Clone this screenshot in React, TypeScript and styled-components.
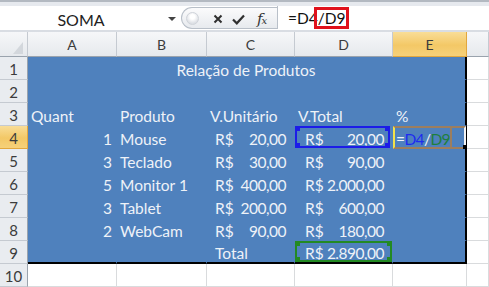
import React from "react";
import styled, { createGlobalStyle, css } from "styled-components";

const Global = createGlobalStyle`
  html, body { margin: 0; padding: 0; background: #fff; overflow: hidden; }
  body { font-family: Lato, "Open Sans", sans-serif; }
`;

const Window = styled.div`
  width: 489px;
  height: 287px;
  overflow: hidden;
  display: flex;
  flex-direction: column;
`;

/* ---------- formula bar ---------- */
const FormulaBar = styled.div`
  height: 33px;
  box-sizing: border-box;
  display: flex;
  padding: 6px 0 3px 0;
  background: linear-gradient(#b3b9c1 0 2px, #e6e9ee 2px 6px, #fff 6px 30px, #d9dde3 30px);
`;

const NameBox = styled.div`
  width: 181px;
  display: flex;
  align-items: center;
  background: #fff;
`;

const NameText = styled.div`
  flex: 1;
  text-align: center;
  font-size: 16px;
  color: #222;
  padding: 3px 0 0 0;
`;

const DropArrow = styled.div`
  width: 19px;
  display: flex;
  justify-content: center;
  &::after {
    content: "";
    border-left: 4px solid transparent;
    border-right: 4px solid transparent;
    border-top: 4px solid #444;
    margin-top: 3px;
  }
`;

const Pill = styled.div`
  width: 96px;
  margin-top: 1px;
  box-sizing: border-box;
  display: flex;
  align-items: center;
  border: 1px solid #b8bfc8;
  border-right: none;
  border-radius: 12px 0 0 12px;
  background: linear-gradient(#fbfbfc, #e7eaee);
`;

const Grip = styled.div`
  width: 11px;
  height: 11px;
  margin-left: 4px;
  border-radius: 50%;
  border: 1px solid #cfd3d9;
  background: radial-gradient(circle at 50% 35%, #ffffff 0 25%, #dde0e5 70%);
`;

const IconSlot = styled.div<{ $ml: number }>`
  margin-left: ${(p) => p.$ml}px;
  margin-top: 2px;
  display: flex;
  align-items: center;
`;

const Fx = styled.span`
  font-family: "DejaVu Serif", "Liberation Serif", serif;
  font-style: italic;
  font-size: 15px;
  color: #333;
  letter-spacing: -1px;
  & small {
    font-size: 10px;
    font-style: italic;
  }
`;

const FormulaInput = styled.div`
  flex: 1;
  background: #fff;
  border-left: 1px solid #b9c0c9;
  display: flex;
  align-items: center;
  padding: 1px 0 0 10px;
  font-size: 15.5px;
  color: #111;
`;

const Marked = styled.span`
  display: inline-block;
  border: 3px solid #e0121c;
  margin-left: -4px;
  padding: 0 0 0 1px;
  line-height: 16px;
`;

/* ---------- sheet ---------- */
const Grid = styled.div`
  display: grid;
  grid-template-columns: 28px 89px 90px 88px 98px 74px 1fr;
  grid-template-rows: 25px repeat(10, 23px);
`;

const headerBase = css`
  box-sizing: border-box;
  display: flex;
  align-items: center;
  justify-content: center;
  font-size: 14px;
  color: #3c3c3c;
`;

const ColHead = styled.div<{ $active?: boolean }>`
  ${headerBase}
  padding-top: 1px;
  border-right: 1px solid ${(p) => (p.$active ? "#e2a73d" : "#c5cad1")};
  border-bottom: 1px solid ${(p) => (p.$active ? "#e2a73d" : "#9aa3ad")};
  background: ${(p) =>
    p.$active
      ? "linear-gradient(#f9dd97, #f3c866 55%, #f6d17a)"
      : "linear-gradient(#f6f7f9, #e6e9ed)"};
`;

const Corner = styled.div`
  box-sizing: border-box;
  border-right: 1px solid #c5cad1;
  border-bottom: 1px solid #9aa3ad;
  background: linear-gradient(#f6f7f9, #e6e9ed);
  display: flex;
  align-items: flex-end;
  justify-content: flex-end;
  padding: 0 4px 2px 0;
  &::after {
    content: "";
    border-left: 10px solid transparent;
    border-bottom: 12px solid #d3d7dc;
  }
`;

const RowHead = styled.div<{ $active?: boolean }>`
  ${headerBase}
  font-size: 15px;
  padding-top: 2px;
  border-right: 1px solid ${(p) => (p.$active ? "#e2a73d" : "#9aa3ad")};
  border-bottom: 1px solid ${(p) => (p.$active ? "#e2a73d" : "#c5cad1")};
  background: ${(p) =>
    p.$active ? "linear-gradient(#f9dd97, #f3c866 55%, #f6d17a)" : "#e9ecf0"};
`;

const Cell = styled.div<{
  $fill?: boolean;
  $align?: "left" | "right" | "center";
  $span?: number;
  $edgeR?: boolean;
  $edgeB?: boolean;
}>`
  position: relative;
  box-sizing: border-box;
  display: flex;
  align-items: flex-end;
  justify-content: ${(p) =>
    p.$align === "right" ? "flex-end" : p.$align === "center" ? "center" : "flex-start"};
  padding: 0 4px 1px 3px;
  font-size: 15.5px;
  line-height: 16px;
  white-space: nowrap;
  grid-column: span ${(p) => p.$span ?? 1};
  background: ${(p) => (p.$fill ? "#4f81bd" : "#fff")};
  color: ${(p) => (p.$fill ? "#eef2f8" : "#111")};
  border-right: ${(p) =>
    p.$edgeR ? "2px solid #000" : p.$fill ? "1px solid #4f81bd" : "1px solid #d9dbdd"};
  border-bottom: ${(p) =>
    p.$edgeB ? "2px solid #000" : p.$fill ? "1px solid #4f81bd" : "1px solid #d9dbdd"};
`;

const Money = styled.div<{ $lead?: number }>`
  flex: 1;
  display: flex;
  justify-content: space-between;
  padding: 0 4px 0 ${(p) => p.$lead ?? 5}px;
`;

const Num = styled.span`
  letter-spacing: -0.5px;
`;

const EditText = styled.span`
  letter-spacing: -0.6px;
`;

/* reference highlight boxes laid over cells */
const RefBox = styled.div<{ $color: string; $right?: number }>`
  position: absolute;
  left: 0;
  top: 0;
  right: ${(p) => p.$right ?? 0}px;
  bottom: 0;
  border: 2px solid ${(p) => p.$color};
  pointer-events: none;
`;

const Handle = styled.div<{ $color: string; $pos: "tl" | "tr" | "bl" | "br" }>`
  position: absolute;
  width: 5px;
  height: 5px;
  background: ${(p) => p.$color};
  ${(p) => (p.$pos[0] === "t" ? "top: -2px;" : "bottom: -2px;")}
  ${(p) => (p.$pos[1] === "l" ? "left: -2px;" : "right: -2px;")}
`;

const EditBox = styled.div`
  position: absolute;
  left: 0;
  top: 0;
  right: -1px;
  bottom: -1px;
  border: 2px solid #9c7e5f;
  border-left: 2px solid #f3e24a;
  border-right: 2px solid #f4f4f4;
  pointer-events: none;
  &::before {
    content: "";
    position: absolute;
    left: 55px;
    top: 0;
    bottom: 0;
    width: 2px;
    background: #9c7e5f;
  }
  &::after {
    content: "";
    position: absolute;
    right: -4px;
    bottom: -3px;
    width: 5px;
    height: 5px;
    background: #000;
  }
`;

const RefText = styled.span<{ $c: string }>`
  color: ${(p) => p.$c};
`;

type Row = {
  n: number;
  a?: string;
  aRight?: boolean;
  b?: string;
  c?: [string, string] | string;
  d?: [string, string] | string;
  e?: string;
};

const rows: Row[] = [
  { n: 3, a: "Quant", b: "Produto", c: "V.Unitário", d: "V.Total", e: "%" },
  { n: 4, a: "1", aRight: true, b: "Mouse", c: ["R$", "20,00"], d: ["R$", "20,00"] },
  { n: 5, a: "3", aRight: true, b: "Teclado", c: ["R$", "30,00"], d: ["R$", "90,00"] },
  { n: 6, a: "5", aRight: true, b: "Monitor 1", c: ["R$", "400,00"], d: ["R$", "2.000,00"] },
  { n: 7, a: "3", aRight: true, b: "Tablet", c: ["R$", "200,00"], d: ["R$", "600,00"] },
  { n: 8, a: "2", aRight: true, b: "WebCam", c: ["R$", "90,00"], d: ["R$", "180,00"] },
];

const val = (v: [string, string] | string | undefined, lead: number) =>
  Array.isArray(v) ? (
    <Money $lead={lead}>
      <span>{v[0]}</span>
      <Num>{v[1]}</Num>
    </Money>
  ) : (
    v
  );

const X = () => (
  <svg width="10" height="10" viewBox="0 0 10 10">
    <path d="M1.5 1.5 L8.5 8.5 M8.5 1.5 L1.5 8.5" stroke="#2f2f2f" strokeWidth="2" fill="none" />
  </svg>
);

const Check = () => (
  <svg width="13" height="11" viewBox="0 0 13 11">
    <path d="M1 5.5 L4.8 9.3 L12 1.5" stroke="#2f2f2f" strokeWidth="2.2" fill="none" />
  </svg>
);

export default function App() {
  return (
    <Window>
      <Global />
      <FormulaBar>
        <NameBox>
          <NameText>SOMA</NameText>
          <DropArrow />
        </NameBox>
        <Pill>
          <Grip />
          <IconSlot $ml={14}>
            <X />
          </IconSlot>
          <IconSlot $ml={9}>
            <Check />
          </IconSlot>
          <IconSlot $ml={12}>
            <Fx>
              f<small>x</small>
            </Fx>
          </IconSlot>
        </Pill>
        <FormulaInput>
          <span>=D4</span>
          <Marked>/D9</Marked>
        </FormulaInput>
      </FormulaBar>

      <Grid>
        <Corner />
        {["A", "B", "C", "D", "E"].map((l) => (
          <ColHead key={l} $active={l === "E"}>
            {l}
          </ColHead>
        ))}
        <ColHead />

        <RowHead>1</RowHead>
        <Cell $fill $span={5} $align="center" $edgeR>
          Relação de Produtos
        </Cell>
        <Cell />

        <RowHead>2</RowHead>
        <Cell $fill />
        <Cell $fill />
        <Cell $fill />
        <Cell $fill />
        <Cell $fill $edgeR />
        <Cell />

        {rows.map((r) => (
          <React.Fragment key={r.n}>
            <RowHead $active={r.n === 4}>{r.n}</RowHead>
            <Cell $fill $align={r.aRight ? "right" : "left"}>
              {r.a}
            </Cell>
            <Cell $fill>{r.b}</Cell>
            <Cell $fill>{val(r.c, 5)}</Cell>
            <Cell $fill>
              {val(r.d, 7)}
              {r.n === 4 && (
                <RefBox $color="#1c1ce8" $right={2}>
                  <Handle $color="#1c1ce8" $pos="tl" />
                  <Handle $color="#1c1ce8" $pos="bl" />
                  <Handle $color="#1c1ce8" $pos="tr" />
                  <Handle $color="#1c1ce8" $pos="br" />
                </RefBox>
              )}
            </Cell>
            <Cell $fill $edgeR>
              {r.n === 4 ? (
                <>
                  <EditText>
                    =<RefText $c="#1d2bf0">D4</RefText>/<RefText $c="#1f7f3b">D9</RefText>
                  </EditText>
                  <EditBox />
                </>
              ) : (
                r.e
              )}
            </Cell>
            <Cell />
          </React.Fragment>
        ))}

        <RowHead>9</RowHead>
        <Cell $fill $edgeB />
        <Cell $fill $edgeB />
        <Cell $fill $edgeB>
          <Money $lead={5}>
            <span>Total</span>
          </Money>
        </Cell>
        <Cell $fill $edgeB>
          <Money $lead={7}>
            <span>R$</span>
            <Num>2.890,00</Num>
          </Money>
          <RefBox $color="#238a23">
            <Handle $color="#238a23" $pos="tl" />
            <Handle $color="#238a23" $pos="bl" />
            <Handle $color="#238a23" $pos="tr" />
            <Handle $color="#238a23" $pos="br" />
          </RefBox>
        </Cell>
        <Cell $fill $edgeR $edgeB />
        <Cell />

        <RowHead>10</RowHead>
        <Cell />
        <Cell />
        <Cell />
        <Cell />
        <Cell />
        <Cell />
      </Grid>
    </Window>
  );
}
